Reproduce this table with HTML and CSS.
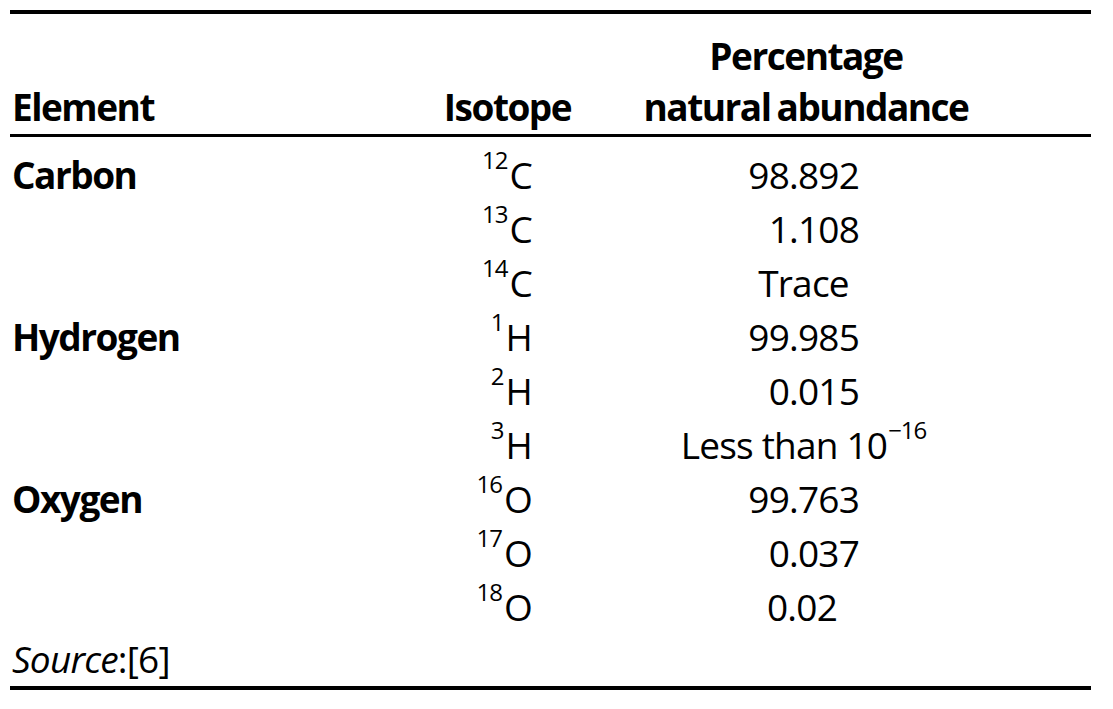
FILE: index.html
```html
<!DOCTYPE html>
<html lang="en">
<head>
<meta charset="utf-8">
<title>Isotope abundance</title>
<link rel="stylesheet" href="styles.css">
</head>
<body>
<table class="iso-table">
  <thead>
    <tr>
      <th class="h-el">Element</th>
      <th class="h-iso">Isotope</th>
      <th class="h-pct">Percentage<br>natural abundance</th>
    </tr>
  </thead>
  <tbody>
    <tr class="first">
      <td class="el">Carbon</td>
      <td class="iso"><span class="sup">12</span>C</td>
      <td class="pct">98.892</td>
    </tr>
    <tr>
      <td class="el"></td>
      <td class="iso"><span class="sup">13</span>C</td>
      <td class="pct">1.108</td>
    </tr>
    <tr>
      <td class="el"></td>
      <td class="iso"><span class="sup">14</span>C</td>
      <td class="pct-c">Trace</td>
    </tr>
    <tr>
      <td class="el">Hydrogen</td>
      <td class="iso"><span class="sup">1</span>H</td>
      <td class="pct">99.985</td>
    </tr>
    <tr>
      <td class="el"></td>
      <td class="iso"><span class="sup">2</span>H</td>
      <td class="pct">0.015</td>
    </tr>
    <tr>
      <td class="el"></td>
      <td class="iso"><span class="sup">3</span>H</td>
      <td class="pct-c">Less than 10<span class="sup sup-exp">−16</span></td>
    </tr>
    <tr>
      <td class="el">Oxygen</td>
      <td class="iso"><span class="sup">16</span>O</td>
      <td class="pct">99.763</td>
    </tr>
    <tr>
      <td class="el"></td>
      <td class="iso"><span class="sup">17</span>O</td>
      <td class="pct">0.037</td>
    </tr>
    <tr>
      <td class="el"></td>
      <td class="iso"><span class="sup">18</span>O</td>
      <td class="pct"><span class="pad">0.02</span></td>
    </tr>
    <tr class="source">
      <td colspan="3"><em>Source</em>:[6]</td>
    </tr>
  </tbody>
</table>
</body>
</html>
```
FILE: styles.css
```css
html, body {
  margin: 0;
  padding: 0;
  background: #ffffff;
}

body {
  padding: 10px 22px 0 10px;
  font-family: "Open Sans", "Noto Sans", sans-serif;
  color: #000000;
}

.iso-table {
  width: 1081px;
  border-collapse: collapse;
  border-top: 4px solid #000;
  border-bottom: 4px solid #000;
  table-layout: fixed;
}

.iso-table th,
.iso-table td {
  padding: 0;
  font-size: 37px;
  vertical-align: bottom;
  white-space: nowrap;
}

.iso-table thead tr {
  border-bottom: 3px solid #000;
}

.iso-table th {
  font-weight: 700;
  letter-spacing: -1.5px;
  line-height: 51px;
  padding-top: 16px;
  padding-bottom: 2px;
}

.h-el {
  width: 431px;
  padding-left: 2px !important;
  text-align: left;
}

.h-iso {
  width: 129px;
  text-align: center;
}

.h-pct {
  text-align: center;
  padding-right: 51px !important;
  word-spacing: -2px;
}

.iso-table td {
  line-height: 54px;
  letter-spacing: -0.8px;
}

.first td {
  padding-top: 11px;
}

.el {
  padding-left: 2px !important;
  font-weight: 700;
  letter-spacing: -1.5px !important;
}

.iso {
  text-align: right;
  padding-right: 40px !important;
}

.pct {
  text-align: right;
  padding-right: 232px !important;
}

.pct-c {
  text-align: center;
  padding-right: 56px !important;
}

.pad {
  padding-right: 22px;
}

.sup {
  font-size: 24px;
  letter-spacing: -1px;
  vertical-align: 20px;
  line-height: 0;
  margin-right: 2px;
}

.sup-exp {
  margin-left: 1px;
  margin-right: 0;
}

.source td {
  line-height: 50px;
  padding-left: 2px;
  padding-bottom: 2px;
  letter-spacing: -0.8px;
}

.source em {
  font-style: italic;
}
```
